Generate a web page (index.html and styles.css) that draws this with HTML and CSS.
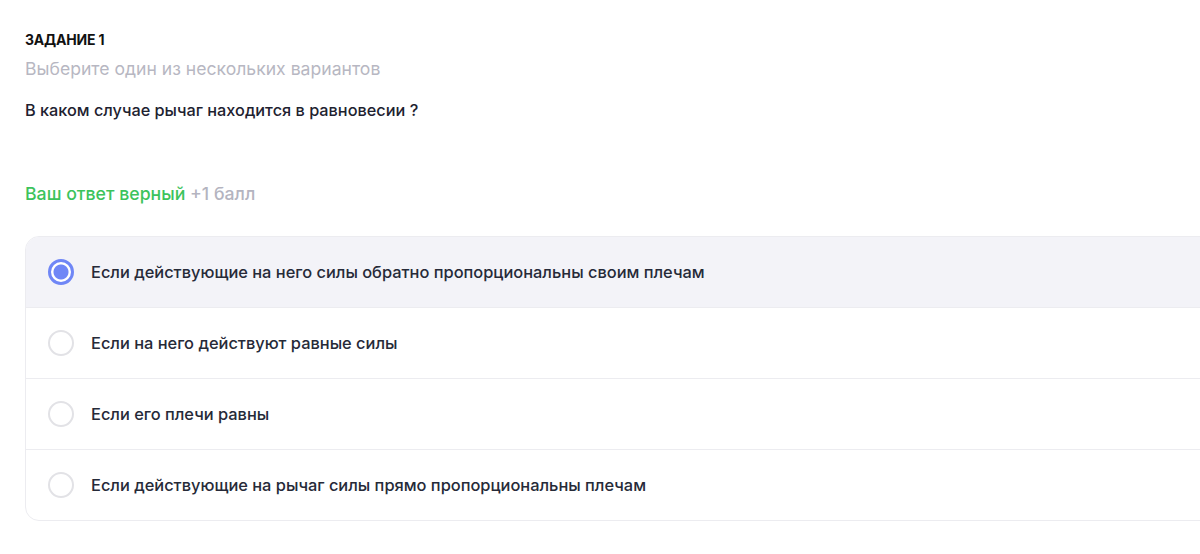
FILE: index.html
```html
<!DOCTYPE html>
<html lang="ru">
<head>
  <meta charset="UTF-8" />
  <title>Задание 1</title>
  <link rel="stylesheet" href="styles.css">
</head>
<body>
  <div class="task">
    <h4 class="task-title">ЗАДАНИЕ 1</h4>
    <div class="task-hint">Выберите один из нескольких вариантов</div>
    <div class="task-question">В каком случае рычаг находится в равновесии ?</div>
    <div class="task-result"><span class="ok">Ваш ответ верный</span> <span class="score">+1 балл</span></div>

    <div class="answers">
      <div class="answer selected"><span class="radio"></span>Если действующие на него силы обратно пропорциональны своим плечам</div>
      <div class="answer"><span class="radio"></span>Если на него действуют равные силы</div>
      <div class="answer"><span class="radio"></span>Если его плечи равны</div>
      <div class="answer"><span class="radio"></span>Если действующие на рычаг силы прямо пропорциональны плечам</div>
    </div>
  </div>
</body>
</html>
```

FILE: styles.css
```css
body {
  font-family: Inter, "Noto Sans", sans-serif;
  margin: 0;
  padding: 0;
  background: #fff;
  color: #1e2230;
  overflow: hidden;
}
.task {
  padding: 31px 0 0 25px;
}
.task-title {
  margin: 0;
  font-size: 14px;
  font-weight: 700;
  line-height: 18px;
  letter-spacing: -0.2px;
  color: #111;
}
.task-hint {
  margin-top: 9px;
  font-size: 17.6px;
  line-height: 22px;
  color: #b7b7c2;
}
.task-question {
  margin-top: 20px;
  font-size: 16.3px;
  line-height: 20px;
  font-weight: 500;
}
.task-result {
  margin-top: 63px;
  font-size: 17.7px;
  line-height: 22px;
  font-weight: 500;
}
.task-result .ok { color: #3cc35c; }
.task-result .score { color: #b4b4c0; }
.answers {
  margin-top: 31px;
  width: 1220px;
  border: 1px solid #ececf0;
  border-radius: 14px;
  overflow: hidden;
}
.answer {
  display: flex;
  align-items: center;
  height: 70px;
  padding-left: 22px;
  font-size: 16.4px;
  font-weight: 500;
  color: #262a38;
  border-top: 1px solid #ececf0;
}
.answer:first-child { border-top: none; }
.answer.selected { background: #f3f3f8; }
.radio {
  width: 22px;
  height: 22px;
  border: 2px solid #e2e2e6;
  border-radius: 50%;
  margin-right: 17px;
  flex-shrink: 0;
  box-sizing: content-box;
  background: #fff;
}
.answer.selected .radio {
  border: 3px solid #6f86f6;
  width: 20px;
  height: 20px;
  background: radial-gradient(circle, #6f86f6 0 7px, #fff 8px);
}
```
